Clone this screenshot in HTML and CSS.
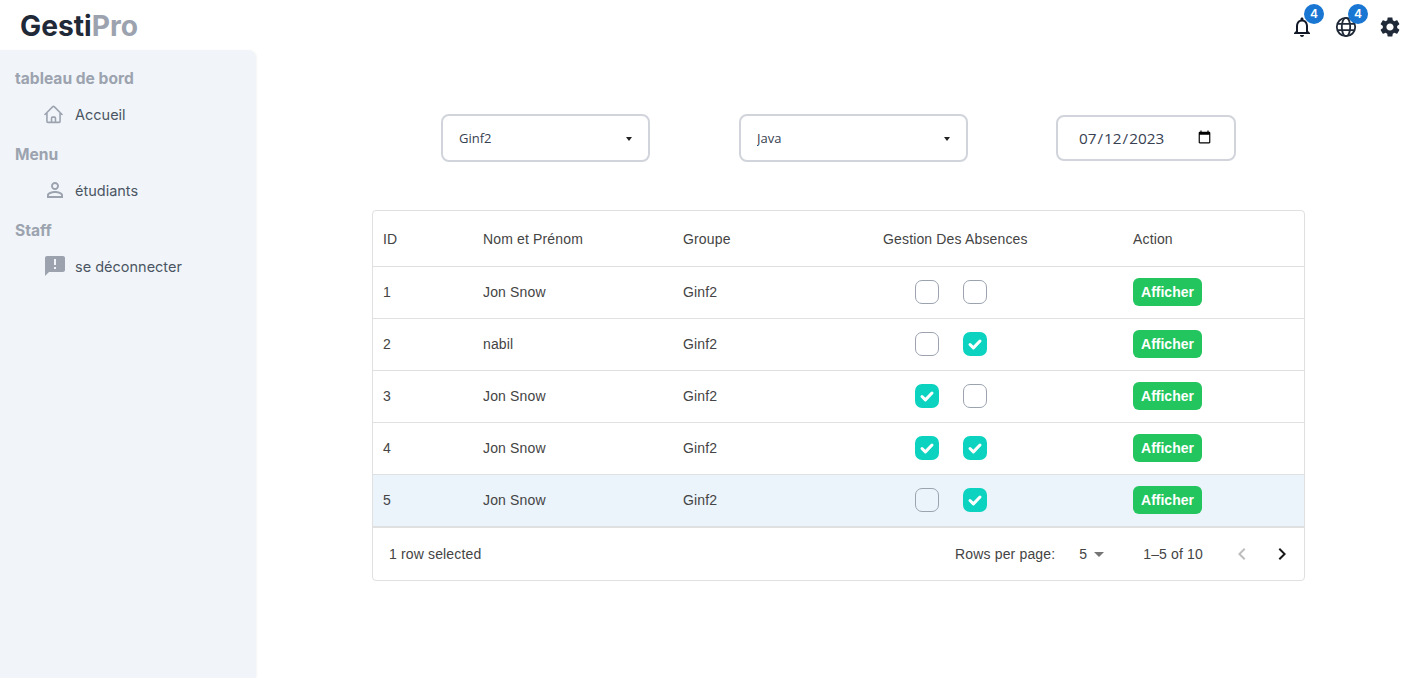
FILE: index.html
```html
<!doctype html>
<html lang="en">
  <head>
    <title>GestiPro</title>
    <meta charset="utf-8" />
    <meta name="viewport" content="width=device-width, initial-scale=1">
    <link rel="stylesheet" href="styles.css">
  </head>
  <body>
    <header class="topbar">
      <div class="logo">Gesti<span>Pro</span></div>
      <div class="top_icons">
        <div class="top_icon">
          <svg viewBox="0 0 24 24" width="24" height="24"><path fill="#111827" d="M12 22c1.1 0 2-.9 2-2h-4c0 1.1.9 2 2 2zm6-6v-5c0-3.07-1.63-5.64-4.5-6.32V4c0-.83-.67-1.5-1.5-1.5s-1.5.67-1.5 1.5v.68C7.64 5.36 6 7.92 6 11v5l-2 2v1h16v-1l-2-2zm-2 1H8v-6c0-2.48 1.51-4.5 4-4.5s4 2.02 4 4.5v6z"/></svg>
          <span class="badge">4</span>
        </div>
        <div class="top_icon">
          <svg viewBox="0 0 24 24" width="24" height="24" fill="none" stroke="#1f2937" stroke-width="1.8"><circle cx="12" cy="12" r="9.2"/><ellipse cx="12" cy="12" rx="4.2" ry="9.2"/><path d="M3.4 8.8h17.2M3.4 15.2h17.2"/></svg>
          <span class="badge">4</span>
        </div>
        <div class="top_icon">
          <svg viewBox="0 0 24 24" width="24" height="24"><path fill="#1f2937" d="M19.14 12.94c.04-.3.06-.61.06-.94 0-.32-.02-.64-.07-.94l2.03-1.58c.18-.14.23-.41.12-.61l-1.92-3.32c-.12-.22-.37-.29-.59-.22l-2.39.96c-.5-.38-1.03-.7-1.62-.94l-.36-2.54c-.04-.24-.24-.41-.48-.41h-3.84c-.24 0-.43.17-.47.41l-.36 2.54c-.59.24-1.13.57-1.62.94l-2.39-.96c-.22-.08-.47 0-.59.22L2.74 8.87c-.12.21-.08.47.12.61l2.03 1.58c-.05.3-.09.63-.09.94s.02.64.07.94l-2.03 1.58c-.18.14-.23.41-.12.61l1.92 3.32c.12.22.37.29.59.22l2.39-.96c.5.38 1.03.7 1.62.94l.36 2.54c.05.24.24.41.48.41h3.84c.24 0 .44-.17.47-.41l.36-2.54c.59-.24 1.13-.56 1.62-.94l2.39.96c.22.08.47 0 .59-.22l1.92-3.32c.12-.22.07-.47-.12-.61l-2.01-1.58zM12 15.6c-1.98 0-3.6-1.62-3.6-3.6s1.62-3.6 3.6-3.6 3.6 1.62 3.6 3.6-1.62 3.6-3.6 3.6z"/></svg>
        </div>
      </div>
    </header>

    <div class="page">
      <!-- left menu -->
      <nav class="sidebar">
        <h3>tableau de bord</h3>
        <a class="side_item" href="#">
          <svg class="home_icon" viewBox="0 0 24 24" width="21" height="21" fill="none" stroke="#9ca3af" stroke-width="1.8" stroke-linecap="round" stroke-linejoin="round"><path d="M2.25 12l8.954-8.955c.44-.439 1.152-.439 1.591 0L21.75 12M4.5 9.75v10.125c0 .621.504 1.125 1.125 1.125H9.75v-4.875c0-.621.504-1.125 1.125-1.125h2.25c.621 0 1.125.504 1.125 1.125V21h4.125c.621 0 1.125-.504 1.125-1.125V9.75M8.25 21h8.25"/></svg>
          Accueil
        </a>
        <h3>Menu</h3>
        <a class="side_item" href="#">
          <svg viewBox="0 0 24 24" width="24" height="24"><path fill="#9ca3af" d="M12 5.9c1.16 0 2.1.94 2.1 2.1s-.94 2.1-2.1 2.1S9.9 9.16 9.9 8s.94-2.1 2.1-2.1m0 9c2.97 0 6.1 1.46 6.1 2.1v1.1H5.9V17c0-.64 3.13-2.1 6.1-2.1M12 4C9.79 4 8 5.79 8 8s1.79 4 4 4 4-1.79 4-4-1.79-4-4-4zm0 9c-2.67 0-8 1.34-8 4v3h16v-3c0-2.66-5.33-4-8-4z"/></svg>
          étudiants
        </a>
        <h3>Staff</h3>
        <a class="side_item" href="#">
          <svg viewBox="0 0 24 24" width="24" height="24"><path fill="#9ca3af" d="M20 2H4c-1.1 0-1.99.9-1.99 2L2 22l4-4h14c1.1 0 2-.9 2-2V4c0-1.1-.9-2-2-2zm-7 9h-2V5h2v6zm0 4h-2v-2h2v2z"/></svg>
          se déconnecter
        </a>
      </nav>

      <main class="content">
        <div class="filters">
          <div class="select_wrap">
            <select class="field select_group">
              <option>Ginf2</option>
            </select>
          </div>
          <div class="select_wrap">
            <select class="field select_subject">
              <option>Java</option>
            </select>
          </div>
          <input class="date_field" type="date" value="2023-07-12"/>
        </div>

        <div class="grid_box">
          <table>
            <colgroup>
              <col class="col_id"><col class="col_name"><col class="col_group"><col class="col_abs"><col>
            </colgroup>
            <thead>
              <tr><th>ID</th><th>Nom et Prénom</th><th>Groupe</th><th>Gestion Des Absences</th><th>Action</th></tr>
            </thead>
            <tbody>
              <tr>
                <td>1</td><td>Jon Snow</td><td>Ginf2</td>
                <td><div class="checks"><span class="check"></span><span class="check"></span></div></td>
                <td><button>Afficher</button></td>
              </tr>
              <tr>
                <td>2</td><td>nabil</td><td>Ginf2</td>
                <td><div class="checks"><span class="check"></span><span class="check on"><svg viewBox="0 0 24 24" width="24" height="24"><path d="M7 12.5l3.4 3.4L17 9"/></svg></span></div></td>
                <td><button>Afficher</button></td>
              </tr>
              <tr>
                <td>3</td><td>Jon Snow</td><td>Ginf2</td>
                <td><div class="checks"><span class="check on"><svg viewBox="0 0 24 24" width="24" height="24"><path d="M7 12.5l3.4 3.4L17 9"/></svg></span><span class="check"></span></div></td>
                <td><button>Afficher</button></td>
              </tr>
              <tr>
                <td>4</td><td>Jon Snow</td><td>Ginf2</td>
                <td><div class="checks"><span class="check on"><svg viewBox="0 0 24 24" width="24" height="24"><path d="M7 12.5l3.4 3.4L17 9"/></svg></span><span class="check on"><svg viewBox="0 0 24 24" width="24" height="24"><path d="M7 12.5l3.4 3.4L17 9"/></svg></span></div></td>
                <td><button>Afficher</button></td>
              </tr>
              <tr class="selected">
                <td>5</td><td>Jon Snow</td><td>Ginf2</td>
                <td><div class="checks"><span class="check"></span><span class="check on"><svg viewBox="0 0 24 24" width="24" height="24"><path d="M7 12.5l3.4 3.4L17 9"/></svg></span></div></td>
                <td><button>Afficher</button></td>
              </tr>
            </tbody>
          </table>
          <div class="grid_footer">
            <span>1 row selected</span>
            <div class="pager">
              <span>Rows per page:</span>
              <span class="per_page">5<svg viewBox="0 0 24 24" width="24" height="24"><path fill="#757575" d="M7 10l5 5 5-5z"/></svg></span>
              <span class="range">1–5 of 10</span>
              <svg viewBox="0 0 24 24" width="24" height="24"><path fill="#bdbdbd" d="M15.41 7.41L14 6l-6 6 6 6 1.41-1.41L10.83 12z"/></svg>
              <svg class="next" viewBox="0 0 24 24" width="24" height="24"><path fill="#1a1a1a" d="M10 6L8.59 7.41 13.17 12l-4.58 4.59L10 18l6-6z"/></svg>
            </div>
          </div>
        </div>
      </main>
    </div>
  </body>
</html>
```

FILE: styles.css
```css
/* Whole page */
html, body{
  margin: 0;
  height: 100%;
}
body{
  font-family: Inter, "Liberation Sans", sans-serif;
  background-color: #fff;
  overflow: hidden;
}

/* Top bar */
.topbar{
  box-sizing: border-box;
  display: flex;
  align-items: center;
  justify-content: space-between;
  height: 50px;
  padding: 3px 20px 0 20px;
}
.logo{
  margin-top: -1px;
  font-size: 28.2px;
  font-weight: 700;
  color: #1f2937;
}
.logo span{
  color: #9ca3af;
}
.top_icons{
  display: flex;
  gap: 20px;
}
.top_icon{
  position: relative;
  width: 24px;
  height: 24px;
}
.badge{
  position: absolute;
  top: -11px;
  left: 14px;
  width: 20px;
  height: 20px;
  border-radius: 50%;
  background-color: #1976d2;
  color: #fff;
  font-size: 12px;
  font-weight: 600;
  line-height: 20px;
  text-align: center;
}

/* Main area */
.page{
  display: flex;
  height: 628px;
}
.sidebar{
  width: 241px;
  padding: 19px 0 0 15px;
  background-color: #f1f5f9;
  border-top-right-radius: 8px;
  box-shadow: 1px 0 2px rgba(0, 0, 0, 0.04);
}
.sidebar h3{
  margin: 0;
  height: 20px;
  font-size: 15.6px;
  font-weight: 700;
  line-height: 20px;
  color: #9ca3af;
}
.side_item{
  display: flex;
  align-items: center;
  gap: 8px;
  height: 24px;
  margin: 13px 0 19px 28px;
  font-size: 14.5px;
  color: #4b5563;
  text-decoration: none;
}
.home_icon{
  margin-right: 3px;
}

.content{
  flex: 1;
  display: flex;
  flex-direction: column;
  align-items: center;
  padding: 64px 1px 0 0;
}

/* Filters */
.filters{
  display: flex;
  align-items: center;
  gap: 88px;
  height: 48px;
  margin-bottom: 48px;
}
.select_wrap{
  position: relative;
  height: 48px;
}
.select_wrap:first-child{
  margin-right: 1px;
}
/* small arrow of the select */
.select_wrap::after{
  content: "";
  position: absolute;
  top: 23px;
  right: 18px;
  border-top: 4px solid #222;
  border-left: 3.5px solid transparent;
  border-right: 3.5px solid transparent;
}
.field{
  appearance: none;
  box-sizing: border-box;
  display: block;
  height: 48px;
  padding: 0 16px;
  border: 2px solid #d1d5db;
  border-radius: 8px;
  background-color: #fff;
  font-family: "Open Sans", sans-serif;
  font-size: 13px;
  color: #374151;
}
.select_group{
  width: 209px;
}
.select_subject{
  width: 229px;
}
.date_field{
  box-sizing: border-box;
  width: 180px;
  height: 46px;
  padding: 0 20px;
  border: 2px solid #d1d5db;
  border-radius: 8px;
  font-family: "Open Sans", sans-serif;
  font-size: 15.3px;
  color: #374151;
}

/* Table */
.grid_box{
  width: 931px;
  border: 1px solid #e0e0e0;
  border-radius: 4px;
  font-family: "Liberation Sans", sans-serif;
  font-size: 14px;
  letter-spacing: 0.15px;
  color: #444;
}
table{
  width: 100%;
  border-collapse: collapse;
  table-layout: fixed;
}
.col_id{
  width: 100px;
}
.col_name, .col_group{
  width: 200px;
}
.col_abs{
  width: 250px;
}
th, td{
  padding: 0 10px;
  border-bottom: 1px solid #e0e0e0;
  text-align: left;
  font-weight: 400;
}
th{
  height: 55px;
}
td{
  box-sizing: border-box;
  height: 52px;
  padding-bottom: 2px;
}
.selected{
  background-color: #ebf3fb;
}
.selected td{
  padding-bottom: 0;
  border-bottom-width: 2px;
}
.checks{
  display: flex;
  gap: 24px;
  padding-left: 32px;
}
.check{
  box-sizing: border-box;
  width: 24px;
  height: 24px;
  border: 1px solid #9ca3af;
  border-radius: 7px;
}
.check.on{
  border: none;
  background-color: #0bd3bf;
}
.check svg{
  display: block;
  fill: none;
  stroke: #fff;
  stroke-width: 3;
  stroke-linecap: round;
  stroke-linejoin: round;
}
button{
  display: block;
  width: 69px;
  height: 28px;
  padding: 0;
  border: none;
  border-radius: 6px;
  background-color: #22c55e;
  color: #fff;
  font-family: "Liberation Sans", sans-serif;
  font-size: 14px;
  font-weight: 700;
}

/* Table footer */
.grid_footer{
  display: flex;
  align-items: center;
  justify-content: space-between;
  height: 52px;
  padding: 0 10px 0 16px;
}
.pager{
  display: flex;
  align-items: center;
}
.per_page{
  display: flex;
  align-items: center;
  width: 40px;
  margin-left: 24px;
}
.range{
  margin: 0 27px 0 24px;
}
.next{
  margin-left: 16px;
}
```
